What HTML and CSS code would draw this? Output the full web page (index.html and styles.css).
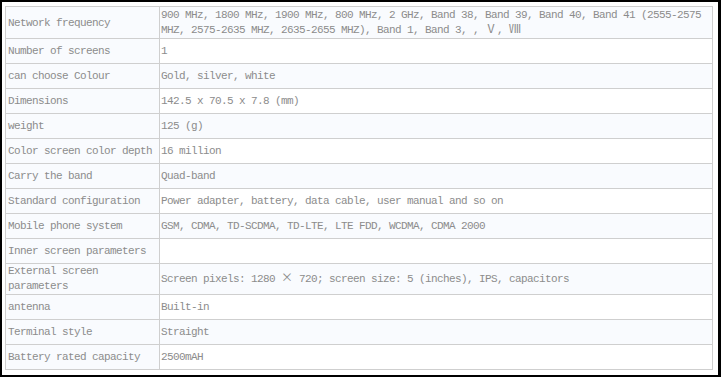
FILE: index.html
```html
<!DOCTYPE html>
<html>
<head>
<meta charset="utf-8">
<link rel="stylesheet" href="styles.css">
</head>
<body>
<div class="frame">
<table class="spec">
<colgroup><col class="c-name"><col class="c-val"></colgroup>
<tbody>
<tr class="first"><td class="name">Network frequency</td><td class="val">900 MHz, 1800 MHz, 1900 MHz, 800 MHz, 2 GHz, Band 38, Band 39, Band 40, Band 41 (2555-2575 MHZ, 2575-2635 MHZ, 2635-2655 MHZ), Band 1, Band 3, , <span class="fw">Ⅴ</span>, <span class="fw">Ⅷ</span></td></tr>
<tr><td class="name">Number of screens</td><td class="val">1</td></tr>
<tr><td class="name">can choose Colour</td><td class="val">Gold, silver, white</td></tr>
<tr><td class="name">Dimensions</td><td class="val">142.5 x 70.5 x 7.8 (mm)</td></tr>
<tr><td class="name">weight</td><td class="val">125 (g)</td></tr>
<tr><td class="name">Color screen color depth</td><td class="val">16 million</td></tr>
<tr><td class="name">Carry the band</td><td class="val">Quad-band</td></tr>
<tr><td class="name">Standard configuration</td><td class="val">Power adapter, battery, data cable, user manual and so on</td></tr>
<tr><td class="name">Mobile phone system</td><td class="val">GSM, CDMA, TD-SCDMA, TD-LTE, LTE FDD, WCDMA, CDMA 2000</td></tr>
<tr><td class="name">Inner screen parameters</td><td class="val"></td></tr>
<tr><td class="name">External screen parameters</td><td class="val">Screen pixels: 1280 <span class="fw">×</span> 720; screen size: 5 (inches), IPS, capacitors</td></tr>
<tr><td class="name">antenna</td><td class="val">Built-in</td></tr>
<tr><td class="name">Terminal style</td><td class="val">Straight</td></tr>
<tr><td class="name">Battery rated capacity</td><td class="val">2500mAH</td></tr>
</tbody>
</table>
</div>
</body>
</html>
```
FILE: styles.css
```css
html, body {
  margin: 0;
  padding: 0;
  background: #fff;
}
.frame {
  box-sizing: border-box;
  width: 721px;
  height: 377px;
  border-style: solid;
  border-color: #000;
  border-width: 2px 3px 2px 2px;
  padding: 4px 5px 0 3px;
  background: #fff;
}
.spec {
  width: 708px;
  border-collapse: collapse;
  table-layout: fixed;
  font-family: "Liberation Mono", "Noto Sans CJK SC", monospace;
  font-size: 11px;
  letter-spacing: -0.6px;
  line-height: 15px;
  color: #8c8c8c;
}
.c-name { width: 154px; }
.spec td {
  border: 1px solid #cfcfcf;
  padding: 0 2px;
  height: 24px;
  vertical-align: middle;
  background: #fff;
}
.spec tr.first td { padding-top: 1px; }
.spec td.val { padding-left: 1px; }
.spec td.name { background: #f9fbfe; }
.spec tr:nth-child(odd) td.val { background: #f9fbfe; }
.fw {
  font-family: "Noto Sans CJK SC", sans-serif;
  font-size: 12px;
  line-height: 0;
  letter-spacing: 0;
  color: #8c8c8c;
}
```
